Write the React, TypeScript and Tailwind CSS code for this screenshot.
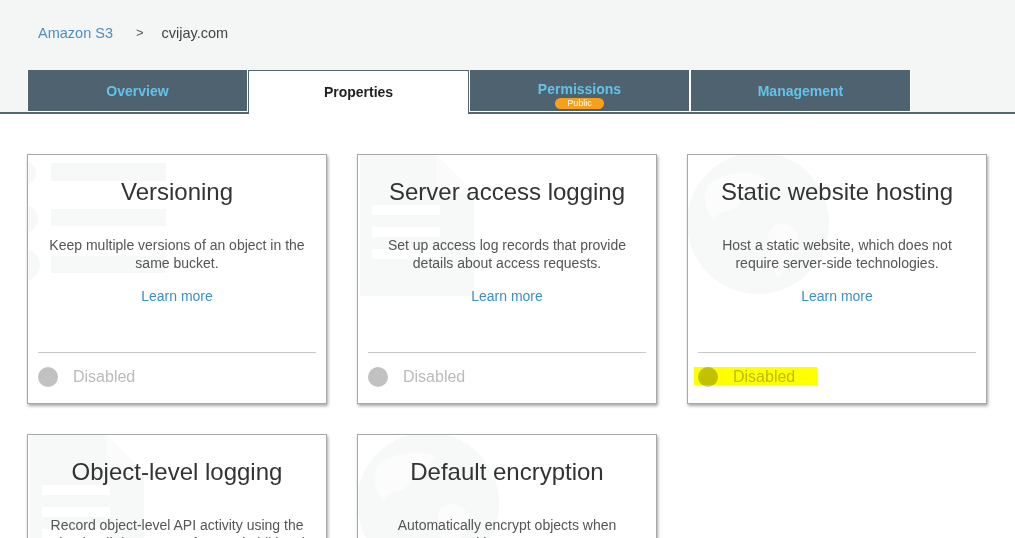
import React from 'react';

type Deco = 'list' | 'doc' | 'globe';

interface CardProps {
  title: string;
  description: string;
  deco: Deco;
  highlight?: boolean;
}

const tabs = [
  { label: 'Overview' },
  { label: 'Properties', active: true },
  { label: 'Permissions', badge: 'Public' },
  { label: 'Management' },
];

const cards: CardProps[] = [
  { title: 'Versioning', description: 'Keep multiple versions of an object in the same bucket.', deco: 'list' },
  { title: 'Server access logging', description: 'Set up access log records that provide details about access requests.', deco: 'doc' },
  { title: 'Static website hosting', description: 'Host a static website, which does not require server-side technologies.', deco: 'globe', highlight: true },
  { title: 'Object-level logging', description: 'Record object-level API activity using the CloudTrail data events feature (additional cost).', deco: 'doc' },
  { title: 'Default encryption', description: 'Automatically encrypt objects when stored in Amazon S3.', deco: 'globe' },
];

// faint watermark drawings behind the card text
const Watermark: React.FC<{ deco: Deco }> = ({ deco }) => {
  if (deco === 'list') {
    return (
      <svg className="absolute left-0 top-0 pointer-events-none" width="180" height="150" viewBox="0 0 180 150">
        <rect x="23" y="8" width="115" height="18" fill="#f7f8f8" />
        <rect x="23" y="54" width="115" height="17" fill="#f7f8f8" />
        <rect x="23" y="101" width="115" height="17" fill="#f7f8f8" />
        <circle cx="-4" cy="18" r="12" fill="#f7f8f8" />
        <circle cx="-4" cy="64" r="14" fill="#f7f8f8" />
        <circle cx="-4" cy="110" r="16" fill="#f7f8f8" />
      </svg>
    );
  }
  if (deco === 'doc') {
    return (
      <svg className="absolute left-0 top-0 pointer-events-none" width="180" height="150" viewBox="0 0 180 150">
        <path d="M2 0 H78 L116 38 V141 H2 Z" fill="#f7f8f8" />
        <path d="M78 0 V38 H116" fill="#fbfbfb" />
        <rect x="14" y="50" width="68" height="10" fill="#ffffff" />
        <rect x="14" y="72" width="68" height="10" fill="#ffffff" />
        <rect x="14" y="94" width="68" height="10" fill="#ffffff" />
      </svg>
    );
  }
  return (
    <svg className="absolute left-0 top-0 pointer-events-none" width="180" height="150" viewBox="0 0 180 150">
      <circle cx="70" cy="68" r="71" fill="#f7f8f8" />
      <path d="M20 30 C35 18 60 14 78 22 C70 34 58 36 52 48 C44 60 30 52 26 66 C18 58 14 44 20 30 Z" fill="#fcfcfc" />
      <path d="M88 70 C100 66 112 74 110 88 C106 104 96 112 90 124 C84 110 82 96 80 86 C80 78 82 72 88 70 Z" fill="#fcfcfc" />
    </svg>
  );
};

const Card: React.FC<CardProps> = ({ title, description, deco, highlight }) => (
  <div className="relative w-[300px] h-[250px] bg-white border border-[#a8a8a8] shadow-[1px_2px_3px_rgba(0,0,0,0.35)] flex flex-col overflow-hidden">
    <Watermark deco={deco} />
    <div className="relative flex flex-col items-center text-center">
      <h2 className="mt-[23px] text-[24px] leading-[28px] text-[#333]">{title}</h2>
      <p className="mt-[30px] px-[20px] text-[14px] leading-[18px] text-[#555]">{description}</p>
      <a className="mt-[15px] text-[14px] leading-[19px] text-[#3b8fc7] cursor-pointer">Learn more</a>
    </div>
    <div className="relative mt-auto mx-[10px] mb-[3px] border-t border-[#c8c8c8] h-[48px] flex items-center">
      <span className="w-[20px] h-[20px] rounded-full bg-[#c1c1c1]" />
      <span className="ml-[15px] text-[16px] text-[#bbb]">Disabled</span>
      {highlight && (
        <span className="absolute left-[-4px] top-[14px] w-[123px] h-[18px] bg-[#ffff00] mix-blend-multiply" />
      )}
    </div>
  </div>
);

export default function App() {
  return (
    <div className="h-[538px] bg-white font-['Liberation_Sans',Arial,sans-serif] overflow-hidden">
      <div className="bg-[#f4f5f5]">
        <div className="pl-[38px] pt-[23px] h-[70px] flex items-start text-[14.5px] leading-[20px]">
          <a className="text-[#4a8fc4] cursor-pointer">Amazon S3</a>
          <span className="ml-[23px] text-[#555] text-[13px]">&gt;</span>
          <span className="ml-[18px] text-[#444]">cvijay.com</span>
        </div>
        <div className="flex items-end pl-[27px] border-b-2 border-[#56666f]">
          {tabs.map((tab) =>
            tab.active ? (
              <div
                key={tab.label}
                className="relative w-[221px] h-[44px] -mb-[2px] bg-white border border-b-0 border-[#56666f] flex items-center justify-center text-[14px] font-bold text-[#222] pb-[1px]"
              >
                {tab.label}
              </div>
            ) : (
              <div
                key={tab.label}
                className="w-[221px] h-[42px] bg-[#4e6270] border-x border-b border-white flex flex-col items-center justify-center text-[14px] font-bold text-[#63c3e8] pt-[2px]"
              >
                <span className={tab.badge ? 'leading-[16px] mt-[6px]' : ''}>{tab.label}</span>
                {tab.badge && (
                  <span className="mt-[1px] px-[12px] h-[11px] rounded-full bg-[#f7a11a] text-white text-[9px] leading-[11px] font-normal">
                    {tab.badge}
                  </span>
                )}
              </div>
            )
          )}
        </div>
      </div>
      <div className="pl-[27px] pt-[40px] grid grid-cols-[300px_300px_300px] gap-[30px]">
        {cards.map((card) => (
          <Card key={card.title} {...card} />
        ))}
      </div>
    </div>
  );
}
